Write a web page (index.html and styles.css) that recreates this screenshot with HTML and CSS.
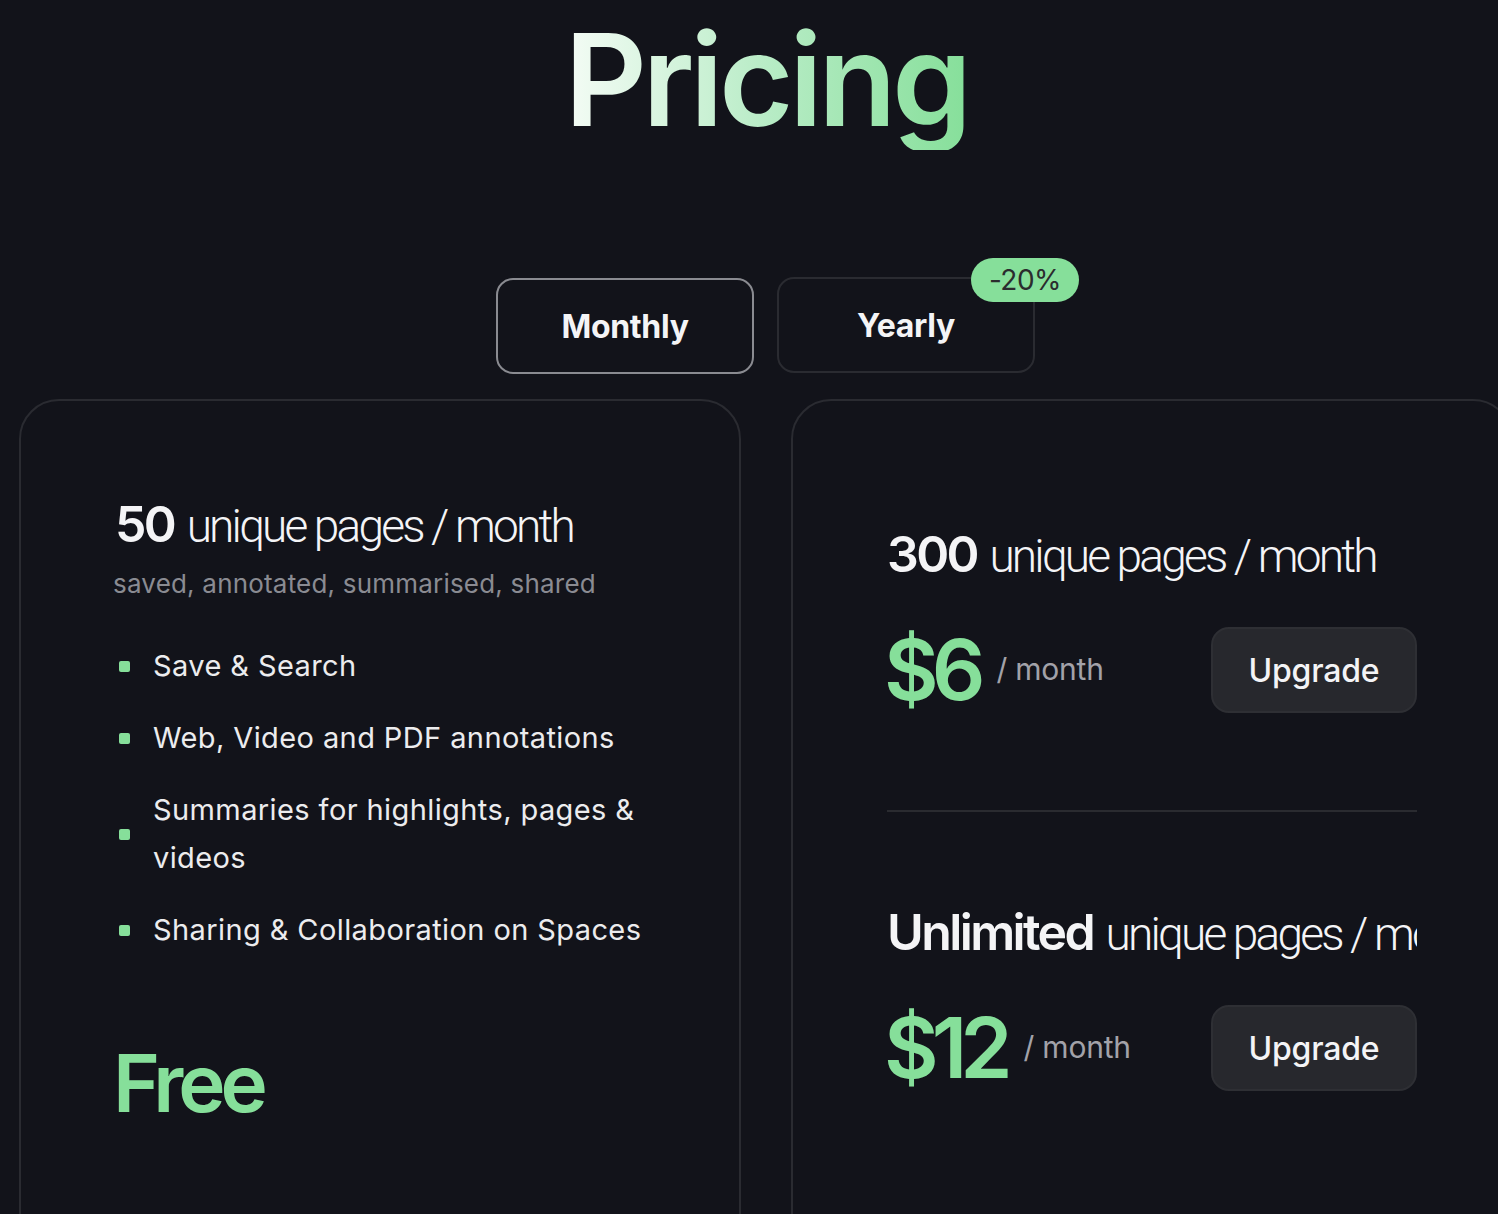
FILE: index.html
```html
<!DOCTYPE html>
<html lang="en">
<head>
<meta charset="utf-8">
<title>Pricing</title>
<link rel="stylesheet" href="styles.css">
</head>
<body>
<main class="page">
  <h1 class="title">Pricing</h1>

  <div class="toggle">
    <button class="toggle-btn active">Monthly</button>
    <button class="toggle-btn">Yearly<span class="badge">-20%</span></button>
  </div>

  <div class="cards">
    <section class="card card-free">
      <h2 class="plan-head"><strong>50</strong> unique pages / month</h2>
      <p class="plan-sub">saved, annotated, summarised, shared</p>
      <ul class="features">
        <li><span class="dot"></span><span>Save &amp; Search</span></li>
        <li><span class="dot"></span><span>Web, Video and PDF annotations</span></li>
        <li><span class="dot"></span><span>Summaries for highlights, pages &amp; videos</span></li>
        <li><span class="dot"></span><span>Sharing &amp; Collaboration on Spaces</span></li>
      </ul>
      <div class="free">Free</div>
    </section>

    <section class="card card-paid">
      <div class="tier">
        <h2 class="plan-head"><strong>300</strong> unique pages / month</h2>
        <div class="price-row">
          <div class="price"><span class="amount">$6</span><span class="per">/ month</span></div>
          <button class="upgrade">Upgrade</button>
        </div>
      </div>
      <hr class="divider">
      <div class="tier">
        <h2 class="plan-head clip"><strong>Unlimited</strong> unique pages / month</h2>
        <div class="price-row">
          <div class="price"><span class="amount">$12</span><span class="per">/ month</span></div>
          <button class="upgrade">Upgrade</button>
        </div>
      </div>
    </section>
  </div>
</main>
</body>
</html>
```

FILE: styles.css
```css
html, body {
  margin: 0;
  padding: 0;
  background: #12131a;
  overflow: hidden;
}
body {
  font-family: Inter, "Noto Sans", "Liberation Sans", sans-serif;
  color: #f2f2f4;
  width: 1498px;
  height: 1214px;
}
.page {
  display: flex;
  flex-direction: column;
  align-items: center;
}
.title {
  margin: 16px 0 0 34px;
  font-size: 128px;
  line-height: 1;
  font-weight: 600;
  letter-spacing: -4.5px;
  background: linear-gradient(90deg, #f5fcf6 0%, #b8ecc6 50%, #86df9a 100%);
  -webkit-background-clip: text;
  background-clip: text;
  color: transparent;
  padding-bottom: 6px;
}
.toggle {
  display: flex;
  gap: 23px;
  margin-top: 128px;
  margin-left: 33px;
}
.toggle-btn {
  position: relative;
  width: 258px;
  height: 96px;
  border-radius: 17px;
  border: 2px solid #2a2b31;
  background: #12131a;
  color: #f4f4f6;
  font-family: Inter, "Noto Sans", sans-serif;
  font-weight: 700;
  font-size: 32px;
  letter-spacing: -0.3px;
}
.toggle-btn.active {
  border-color: #8a8b91;
}
.toggle-btn + .toggle-btn {
  margin-top: -1px;
}
.badge {
  position: absolute;
  top: -21px;
  right: -46px;
  width: 108px;
  height: 44px;
  border-radius: 22px;
  background: #86df9a;
  color: #2b2c2e;
  font-weight: 400;
  font-size: 28px;
  line-height: 44px;
  letter-spacing: -0.5px;
  text-align: center;
}
.cards {
  align-self: flex-start;
  display: flex;
  gap: 50px;
  margin-top: 25px;
  margin-left: 19px;
}
.card {
  flex: none;
  width: 722px;
  height: 900px;
  box-sizing: border-box;
  border: 2px solid #2a2b31;
  border-radius: 40px;
  padding: 93px 94px 0;
}
.card-paid {
  padding-top: 123px;
}
.plan-head {
  margin: 0;
  font-family: Roboto, Inter, sans-serif;
  font-size: 46px;
  line-height: 60px;
  font-weight: 300;
  letter-spacing: -2.8px;
  color: #f4f4f6;
  white-space: nowrap;
}
.plan-head strong {
  font-family: Inter, sans-serif;
  font-size: 50px;
  font-weight: 600;
  letter-spacing: -2.6px;
  margin-right: 4px;
}
.plan-head.clip {
  overflow: hidden;
}
.plan-sub {
  margin: 10px 0 0 -2px;
  font-size: 26px;
  line-height: 36px;
  color: #8a8b92;
  letter-spacing: 0.2px;
}
.features {
  list-style: none;
  margin: 40px -20px 0 0;
  padding: 0;
  display: flex;
  flex-direction: column;
  gap: 24px;
}
.features li {
  display: flex;
  align-items: center;
  gap: 23px;
  font-size: 29px;
  line-height: 48px;
  font-weight: 400;
  color: #ececee;
  letter-spacing: 0.4px;
  padding-right: 20px;
}
.dot {
  flex: none;
  width: 11px;
  height: 11px;
  border-radius: 2px;
  background: #86df9a;
  margin-left: 4px;
}
.free {
  margin-top: 89px;
  margin-left: -2px;
  font-size: 80px;
  line-height: 1;
  font-weight: 600;
  letter-spacing: -5px;
  color: #86df9a;
}
.price-row {
  display: flex;
  align-items: center;
  justify-content: space-between;
  margin-top: 41px;
}
.price {
  display: flex;
  align-items: baseline;
  gap: 18px;
}
.amount {
  font-size: 84px;
  line-height: 84px;
  font-weight: 600;
  letter-spacing: -7px;
  margin-left: -3px;
  color: #86df9a;
}
.per {
  font-size: 30px;
  color: #a2a2a9;
  letter-spacing: -0.2px;
  position: relative;
  top: -20px;
}
.upgrade {
  width: 206px;
  height: 86px;
  border-radius: 18px;
  border: 2px solid #2e2f34;
  background: #27282d;
  color: #f4f4f6;
  font-family: Inter, "Noto Sans", sans-serif;
  font-size: 32px;
  font-weight: 500;
  letter-spacing: -0.2px;
}
.divider {
  border: 0;
  height: 2px;
  background: #2a2b30;
  margin: 97px 0 90px;
}
```
